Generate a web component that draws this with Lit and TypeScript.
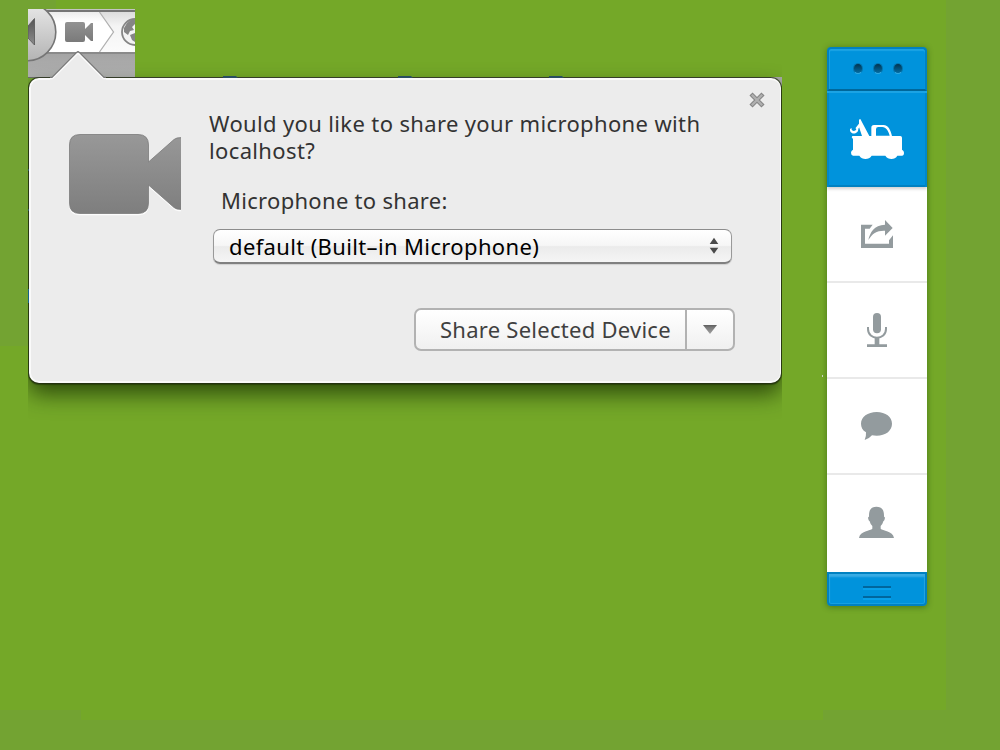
import { LitElement, html, css, svg } from "lit";
import { customElement } from "lit/decorators.js";

@customElement("browser-strip")
class BrowserStrip extends LitElement {
  static styles = css`
    :host { display: block; width: 107px; height: 68px; overflow: hidden; }
    svg { display: block; }
  `;
  render() {
    return html`<svg width="107" height="68" viewBox="28 9 107 68">
      <defs>
        <linearGradient id="bar" x1="0" y1="0" x2="0" y2="1"><stop offset="0" stop-color="#bebebe"/><stop offset=".63" stop-color="#a3a3a3"/><stop offset="1" stop-color="#b2b2b2"/></linearGradient>
        <linearGradient id="btn" x1="0" y1="0" x2="0" y2="1"><stop offset="0" stop-color="#e8e8e8"/><stop offset="1" stop-color="#b4b4b4"/></linearGradient>
        <linearGradient id="field" x1="0" y1="0" x2="0" y2="1"><stop offset="0" stop-color="#ececec"/><stop offset=".25" stop-color="#ffffff"/><stop offset="1" stop-color="#ffffff"/></linearGradient>
        <linearGradient id="rest" x1="0" y1="0" x2="0" y2="1"><stop offset="0" stop-color="#dcdcdc"/><stop offset=".35" stop-color="#f4f4f4"/><stop offset="1" stop-color="#fbfbfb"/></linearGradient>
        <linearGradient id="arrow" x1="0" y1="0" x2="0" y2="1"><stop offset="0" stop-color="#555"/><stop offset="1" stop-color="#8c8c8c"/></linearGradient>
        <linearGradient id="cam" x1="0" y1="0" x2="0" y2="1"><stop offset="0" stop-color="#929292"/><stop offset="1" stop-color="#7a7a7a"/></linearGradient>
      </defs>
      <rect x="28" y="9" width="107" height="68" fill="url(#bar)"/>
      <rect x="28" y="9" width="107" height="1" fill="#c4c4c4"/>
      <rect x="40" y="12" width="95" height="40" fill="url(#field)"/>
      <path d="M100 12H135V52H100L114 32Z" fill="url(#rest)"/>
      <path d="M99.500 12L113.500 32L99.500 52" fill="none" stroke="#b0b0b0" stroke-width="1.300"/>
      <rect x="40" y="10" width="95" height="2" fill="#757575"/>
      <rect x="40" y="52" width="95" height="2" fill="#8a8a8a"/>
      <circle cx="27" cy="32" r="28.800" fill="url(#btn)" stroke="#757575" stroke-width="1.600"/>
      <path d="M28 26L34.500 18.500V45L28 38Z" fill="url(#arrow)" stroke="#555" stroke-width=".8"/>
      <path d="M67 22H83Q85 22 85 24V29L91 23H93V41H91L85 35V40Q85 42 83 42H67Q65 42 65 40V24Q65 22 67 22Z" fill="url(#cam)"/>
      <circle cx="135" cy="32" r="13" fill="#f3f3f3" stroke="#858585" stroke-width="1.800"/>
      <path d="M124 28L127 23L131 20L135 19V24L132 27L134 30L130 31L128 35L124 32Z M130 35L135 33V42L132 40Z" fill="#858585"/>
    </svg>`;
  }
}

@customElement("share-dialog")
class ShareDialog extends LitElement {
  static styles = css`
    :host { display: block; width: 754px; }
    .clip { height: 346px; padding: 0 1px; position: relative; clip-path: inset(-27px 0 0 0);
      background: linear-gradient(#a9a9a9, #a9a9a9) 743px 0 / 11px 9px no-repeat, linear-gradient(#6e6e6e,#6e6e6e) 0 0 / 754px 1px no-repeat; }
    .pointer { position: absolute; left: 22px; top: -27px; display: block; }
    .marks { position: absolute; left: 0; top: -1px; display: block; }
    .card { box-sizing: border-box; width: 752px; height: 305px; position: relative; top: 1px;
      border-radius: 10px; background: #ececec; border: 1px solid #fafafa; border-top-width: 2px; border-left-width: 2px; border-bottom-width: 2px;
      box-shadow: 0 0 0 1px rgba(35,45,20,.7), 0 1px 1px 1px rgba(20,35,0,.45), 0 11px 22px rgba(20,40,0,.72);
      display: flex; align-items: flex-start; color: #333; font: 22px "Noto Sans", "Open Sans", sans-serif; }
    .camera { margin: 53px 0 0 37px; display: block; flex: none; }
    .body { margin-left: 28px; padding-top: 30px; width: 526px; display: flex; flex-direction: column; flex: none; white-space: nowrap; }
    .question { line-height: 27px; letter-spacing: .36px; }
    .label { line-height: 30px; margin: 21px 0 0 12px; letter-spacing: .3px; }
    .select { box-sizing: border-box; width: 519px; height: 35px; margin: 14px 0 0 4px; border: 1px solid #999; border-top-color: #8c8c8c; border-bottom: 2px solid #808080;
      border-radius: 7px; background: linear-gradient(#fff 0, #f6f6f6 48%, #ebebeb 52%, #f5f5f5 100%); color: #000;
      display: flex; align-items: center; justify-content: space-between; padding: 0 12px 0 15px; line-height: 30px; letter-spacing: .36px; box-shadow: 0 1px 1px rgba(0,0,0,.12); }
    .split { box-sizing: border-box; width: 321px; height: 43px; margin: 44px 0 0 205px; display: flex; border: 2px solid #b2b2b2; border-radius: 7px;
      background: linear-gradient(#fff, #f0f0f0); color: #404040; }
    .main { border-right: 2px solid #b2b2b2; line-height: 39px; padding-left: 24px; width: 245px; letter-spacing: .26px; }
    .more { flex: 1; display: flex; align-items: center; justify-content: center; }
    .close { position: absolute; right: 15px; top: 12px; display: block; }
  `;
  render() {
    return html`<div class="clip">
      <div class="card">
        <svg class="camera" width="113" height="83" viewBox="68 133 113 83">
          <defs><linearGradient id="c" x1="0" y1="0" x2="0" y2="1"><stop offset="0" stop-color="#989898"/><stop offset="1" stop-color="#7e7e7e"/></linearGradient></defs>
          <path transform="translate(0 1.300)" d="M80 134H138Q149 134 149 145V161L174 139Q176 137 181 137V210Q176 210 174 208L149 186V203Q149 214 138 214H80Q69 214 69 203V145Q69 134 80 134Z" fill="#fcfcfc"/>
          <path d="M80 134.500H138Q148.500 134.500 148.500 145V162L174 139.500Q176 137.500 182 137.500V209.500Q176 209.500 174 207.500L148.500 185V203Q148.500 213.500 138 213.500H80Q69.500 213.500 69.500 203V145Q69.500 134.500 80 134.500Z" fill="url(#c)" stroke="#7b7b7b" stroke-opacity=".8"/>
        </svg>
        <div class="body">
          <div class="question">Would you like to share your microphone with<br>localhost?</div>
          <div class="label">Microphone to share:</div>
          <div class="select"><span>default (Built–in Microphone)</span>
            <svg width="10" height="18" viewBox="0 0 10 18"><path d="M5 .8L9.300 7H.7ZM5 16.800L9.300 10.700H.7Z" fill="#4a4a4a"/></svg>
          </div>
          <div class="split"><span class="main">Share Selected Device</span>
            <span class="more"><svg width="16" height="10" viewBox="0 0 16 10"><defs><linearGradient id="d" x1="0" y1="0" x2="0" y2="1"><stop offset="0" stop-color="#5e5e5e"/><stop offset=".3" stop-color="#7c7c7c"/><stop offset="1" stop-color="#a0a0a0"/></linearGradient></defs><path d="M1 0H15L8 9Z" fill="url(#d)"/></svg></span>
          </div>
        </div>
        <svg class="close" width="16" height="16" viewBox="0 0 16 16"><path d="M2 2L14 14M14 2L2 14" stroke="#868686" stroke-width="4.400"/><path d="M2.800 2.800L13.200 13.200M13.200 2.800L2.800 13.200" stroke="#b0b0b0" stroke-width="2.300"/></svg>
      </div>
      <svg class="marks" width="754" height="235" viewBox="0 0 754 235"><path d="M195 0h13l2 2h-15ZM370 0h13l2 2h-15ZM521 0h13l2 2h-15ZM0 93h1v2h-1ZM0 133h1v2h-1Z" fill="#294e61"/><path d="M0 213h1v14h-1Z" fill="#17618a"/></svg>
      <svg class="pointer" width="56" height="32" viewBox="50 50 56 32">
        <path d="M50 77.500H52L76.500 53Q78 51.500 79.500 53L104 77.500H106V82H50Z" fill="#ececec"/>
        <path d="M50 78.500H52.500L76.800 54.200Q78 53 79.200 54.200L103.500 78.500H106" fill="none" stroke="#fafafa" stroke-width="1.500"/>
        <path d="M50 77.300H52L76.700 52.400Q78 51.100 79.300 52.400L104 77.300H106" fill="none" stroke="#777" stroke-width="1.200"/>
      </svg>
    </div>`;
  }
}

const share = svg`<path d="M123 104H158L149 116H135V161H207V151L219 136V174H123ZM145 150C150 128 162 105 195 104V90L218 114L195 137V122C171 121 157 130 145 150Z"/>`;
const mic = svg`<rect x="159" y="369" width="24" height="61" rx="12"/><path d="M144 411V417C144 452 198 452 198 417V411" fill="none" stroke="#939b9e" stroke-width="6"/><path d="M164 443H178V463H201V471H141V463H164Z"/>`;
const chat = svg`<path d="M170 96C197 96 216 111 216 131C216 152 197 167 170 167Q162 167 156 166Q149 175 134 180Q139 170 138 157C128 151 123 142 123 131C123 111 143 96 170 96Z"/>`;
const person = svg`<path d="M169 380C184 380 193 388 192 410Q196 410 194 418Q193 423 190 424Q188 433 182 438V446C187 453 219 451 222 474H117C120 451 152 453 157 446V438Q151 433 149 424Q146 423 145 418Q143 410 147 410C146 388 155 380 169 380Z"/>`;
const truck = svg`<path fill-rule="evenodd" d="M97 288H126L117 261V241Q120 233 123 241L148 288H154V263Q154 255 162 255H190C206 255 212 272 216 288H241Q246 288 246 293V329Q252 332 252 338Q252 347 246 347H232C225 360 204 360 196 347H155C147 360 126 360 118 347H99Q93 345 93 338Q93 332 99 329V297L95 292ZM168 287H209C205 272 198 261 187 261H175Q168 261 168 268Z"/><path d="M118 250L106 265C112 267 107 273 102 273C97 273 93 269 95 264L90 267C88 286 116 284 115 266L121 258Z"/>`;

@customElement("tool-rail")
class ToolRail extends LitElement {
  static styles = css`
    :host { display: block; width: 100px; box-shadow: 0 1px 6px rgba(20,55,0,.45); border-radius: 4px; }
    .rail { display: flex; flex-direction: column; }
    svg { display: block; }
    .top { box-sizing: border-box; height: 44px; background: #0093dc; border: 2px solid #0081c1; border-bottom-color: #00689c; border-radius: 4px 4px 0 0;
      box-shadow: inset 0 2px 1px #1ba3e4, inset 1px 0 #16a0e2; display: flex; justify-content: center; gap: 10px; padding: 14px 0 0 2px; }
    .dot { box-sizing: border-box; width: 10px; height: 11px; border: 1px solid #0476af; border-bottom-color: #30a9e0; border-radius: 50%; background: linear-gradient(#02344f, #036ca2); }
    .active { box-sizing: border-box; height: 96px; background: #0093dc; box-shadow: inset 0 2px #1ba3e4, inset 2px 0 #0087ca, inset -2px 0 #0087ca, inset 0 -2px #0081c1, 0 2px 3px rgba(0,0,0,.18); z-index: 1; }
    .cell { background: #fff; height: 94px; border-bottom: 2px solid #e9e9e9; }
    .last { height: 97px; border: 0; }
    .foot { box-sizing: border-box; height: 34px; background: #0093dc; border: 2px solid #0081c1; border-radius: 0 0 4px 4px; box-shadow: inset 0 3px 2px #39ace4, inset 1px 0 #16a0e2, inset -1px 0 #16a0e2, inset 0 -1px #16a0e2;
      display: flex; flex-direction: column; align-items: center; gap: 6px; padding-top: 12px; }
    .grip { width: 28px; height: 2px; background: #00669d; border-bottom: 2px solid #07a0ea; }
  `;
  render() {
    return html`<div class="rail">
      <div class="top"><i class="dot"></i><i class="dot"></i><i class="dot"></i></div>
      <div class="active"><svg width="100" height="96" viewBox="21 153 300 288" fill="#fff">${truck}</svg></div>
      <div class="cell"><svg width="100" height="96" viewBox="21 -9 300 288" fill="#939b9e">${share}</svg></div>
      <div class="cell"><svg width="100" height="96" viewBox="21 279 300 288" fill="#939b9e">${mic}</svg></div>
      <div class="cell"><svg width="100" height="96" viewBox="21 -3 300 288" fill="#939b9e">${chat}</svg></div>
      <div class="cell last"><svg width="100" height="97" viewBox="21 285 300 291" fill="#939b9e">${person}</svg></div>
      <div class="foot"><i class="grip"></i><i class="grip"></i></div>
    </div>`;
  }
}

@customElement("app-root")
class AppRoot extends LitElement {
  static styles = css`
    :host { display: flex; align-items: flex-start; box-sizing: border-box; width: 1000px; height: 750px; padding-left: 28px; overflow: hidden;
      background: linear-gradient(#cfd8c8,#cfd8c8) 822px 375px / 1px 2px no-repeat, linear-gradient(#74a828,#74a828) 56px 0 / 890px 710px no-repeat, linear-gradient(#74a828,#74a828) 0 346px / 946px 364px no-repeat,
        linear-gradient(#74a828,#74a828) 81px 700px / 742px 20px no-repeat, #73a332; }
    .left { padding-top: 9px; }
    .rail { margin: 47px 0 0 45px; }
  `;
  render() {
    return html`<div class="left"><browser-strip></browser-strip><share-dialog></share-dialog></div><tool-rail class="rail"></tool-rail>`;
  }
}
